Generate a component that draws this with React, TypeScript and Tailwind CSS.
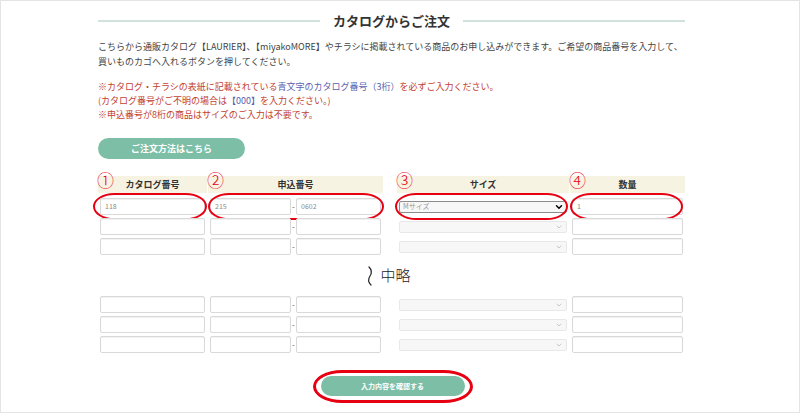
import { ChevronDown } from 'lucide-react'

const font = "font-['Noto_Sans_CJK_JP','Noto_Sans',sans-serif]"

function Box({ value, w }: { value?: string; w: string }) {
  return (
    <div
      className={`${w} flex h-[17px] items-center rounded-[2px] border border-[#d9d9d9] bg-white pl-[4px] text-[7px] text-[#8a8a8a] shadow-[inset_0_1px_1px_rgba(0,0,0,0.06)]`}
    >
      {value}
    </div>
  )
}

function Select({ value }: { value?: string }) {
  if (value) {
    return (
      <div className="flex h-[12px] w-[168px] items-center justify-between rounded-[2px] border border-[#8c8c8c] bg-[#f7f7f7] pl-[3px] pr-[2px] text-[7px] text-[#999]">
        <span>{value}</span>
        <ChevronDown className="h-[10px] w-[10px] text-black" strokeWidth={3.5} />
      </div>
    )
  }
  return (
    <div className="flex h-[12px] w-[168px] items-center justify-end rounded-[2px] border border-[#e8e8e8] bg-[#f7f7f7] pr-[3px]">
      <ChevronDown className="h-[8px] w-[8px] text-[#b0b0b0]" strokeWidth={2} />
    </div>
  )
}

function Ring({ className }: { className: string }) {
  return (
    <div
      className={`pointer-events-none absolute rounded-[22px/14px] border-2 border-[#e60012] ${className}`}
    />
  )
}

function Row({ first }: { first?: boolean }) {
  return (
    <div className="flex h-[17px] items-center">
      <div className="relative flex w-[109px] justify-center">
        <Box w="w-[105px]" value={first ? '118' : undefined} />
        {first && <Ring className="-top-[5px] -bottom-[5px] left-[-5px] right-0" />}
      </div>
      <div className="relative ml-[1px] flex w-[175px] items-center justify-center">
        <Box w="w-[81px]" value={first ? '215' : undefined} />
        <span className="w-[5px] text-center text-[8px] leading-none text-[#555]">-</span>
        <Box w="w-[85px]" value={first ? '0602' : undefined} />
        {first && <Ring className="-top-[5px] -bottom-[5px] left-0 right-[-1px]" />}
      </div>
      <div className="relative ml-[14px] flex w-[172px] justify-center">
        <Select value={first ? 'Mサイズ' : undefined} />
        {first && <Ring className="-top-[8px] -bottom-[7px] left-[-2px] right-[1px]" />}
      </div>
      <div className="relative ml-[1px] flex w-[115px] justify-center">
        <Box w="w-[111px]" value={first ? '1' : undefined} />
        {first && <Ring className="-top-[5px] -bottom-[5px] left-0 right-[2px]" />}
      </div>
    </div>
  )
}

function Head({ num, label, w, ml }: { num: string; label: string; w: string; ml: string }) {
  return (
    <div className={`relative ${w} ${ml} flex h-[17px] items-center justify-center bg-[#f7f3e3]`}>
      <span className="text-[9px] font-bold text-[#333]">{label}</span>
      <span className="absolute left-[-1px] top-[-5px] text-[17px] font-light leading-none text-[#e60012]">
        {num}
      </span>
    </div>
  )
}

export default function App() {
  return (
    <div className={`${font} h-[413px] w-[800px] overflow-hidden border border-[#e4e4e4] bg-white`}>
      <div className="ml-[97px] w-[587px] pt-[10px]">
        <div className="flex h-[20px] items-center">
          <div className="h-[2px] flex-1 bg-[#cfe3dc]" />
          <h2 className="px-[13px] text-[13px] font-bold text-[#333]">カタログからご注文</h2>
          <div className="h-[2px] flex-1 bg-[#cfe3dc]" />
        </div>

        <p className="mt-[8px] text-[9px] leading-[15px] text-[#444]">
          こちらから通販カタログ【LAURIER】、【miyakoMORE】やチラシに掲載されている商品のお申し込みができます。ご希望の商品番号を入力して、
          <br />
          買いものカゴへ入れるボタンを押してください。
        </p>

        <div className="mt-[11px] text-[9px] leading-[14px] text-[#c2412f]">
          <p>
            ※カタログ・チラシの表紙に記載されている
            <span className="text-[#5a5fb0]">青文字のカタログ番号（3桁）</span>
            を必ずご入力ください。
          </p>
          <p>
            (カタログ番号がご不明の場合は<span className="text-[#5a5fb0]">【000】</span>を入力ください。)
          </p>
          <p>※申込番号が8桁の商品はサイズのご入力は不要です。</p>
        </div>

        <div className="mt-[16px] flex h-[21px] w-[147px] items-center justify-center rounded-full bg-[#7dbea7] text-[9px] font-bold text-white">
          ご注文方法はこちら
        </div>

        <div className="mt-[17px] flex">
          <Head num="①" label="カタログ番号" w="w-[109px]" ml="" />
          <Head num="②" label="申込番号" w="w-[175px]" ml="ml-[1px]" />
          <Head num="③" label="サイズ" w="w-[172px]" ml="ml-[14px]" />
          <Head num="④" label="数量" w="w-[115px]" ml="ml-[1px]" />
        </div>

        <div className="mt-[5px] flex flex-col gap-[3px]">
          <Row first />
          <Row />
          <Row />
        </div>

        <div className="flex h-[41px] items-center justify-center gap-[6px] pr-[6px]">
          <svg width="8" height="20" viewBox="0 0 8 20" fill="none">
            <path
              d="M3 1 C6 4, 6 7, 4 10 C2 13, 2 16, 5 19"
              stroke="#222"
              strokeWidth="1.2"
              strokeLinecap="round"
            />
          </svg>
          <span className="text-[15px] font-light text-[#222]">中略</span>
        </div>

        <div className="flex flex-col gap-[3px]">
          <Row />
          <Row />
          <Row />
        </div>

        <div className="mt-[23px] flex justify-center pl-[2px]">
          <div className="relative">
            <div className="flex h-[20px] w-[144px] items-center justify-center rounded-full bg-[#7dbea7] text-[7px] font-bold text-white">
              入力内容を確認する
            </div>
            <Ring className="-top-[6px] -bottom-[7px] -left-[8px] -right-[8px] rounded-[30px/17px] border-[3px]" />
          </div>
        </div>
      </div>
    </div>
  )
}
